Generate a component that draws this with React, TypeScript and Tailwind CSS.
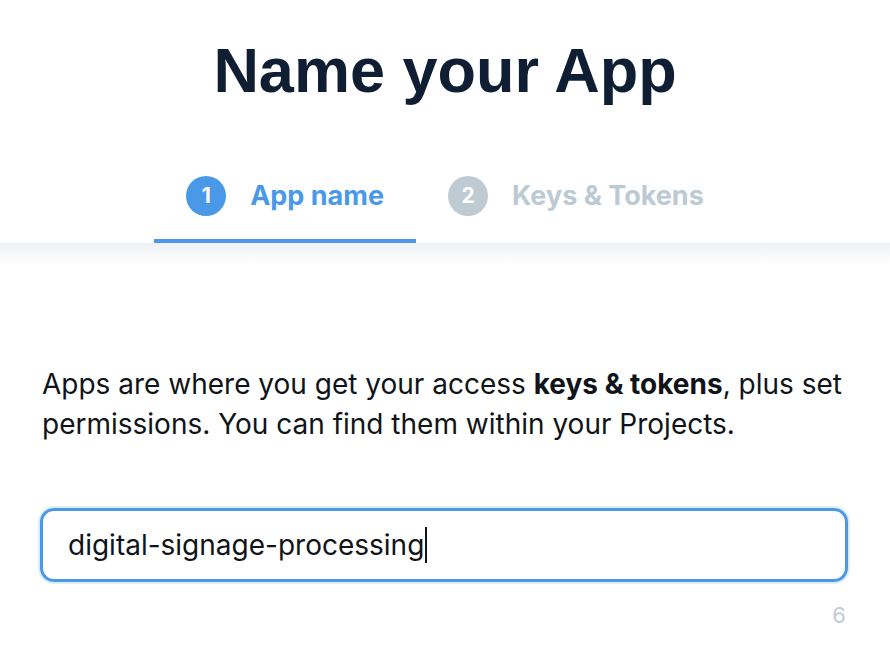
import React from 'react';

const tabs = [
  { n: 1, label: 'App name', active: true },
  { n: 2, label: 'Keys & Tokens', active: false },
];

export default function App() {
  return (
    <div className="w-[890px] h-[662px] bg-white overflow-hidden font-['Inter',sans-serif]">
      {/* Header */}
      <h1 className="pt-[39px] text-center text-[63px] leading-none font-bold text-[#0f1e32] font-['Liberation_Sans',Arial,sans-serif]">
        Name your App
      </h1>

      {/* Steps */}
      <div className="mt-[51px] flex justify-center">
        {tabs.map((t) => (
          <div
            key={t.n}
            className={
              t.active
                ? 'flex h-[90px] items-center gap-6 border-b-4 border-[#4a99e9] px-8'
                : 'flex h-[90px] items-center gap-6 border-b-4 border-transparent px-8'
            }
          >
            <span
              className={
                t.active
                  ? 'flex h-10 w-10 items-center justify-center rounded-full bg-[#4a99e9] text-[21px] font-bold text-white'
                  : 'flex h-10 w-10 items-center justify-center rounded-full bg-[#bfcbd3] text-[21px] font-bold text-white'
              }
            >
              {t.n}
            </span>
            <span
              className={
                t.active
                  ? 'text-[27px] font-bold text-[#4a99e9]'
                  : 'text-[27px] font-bold text-[#bccad3]'
              }
            >
              {t.label}
            </span>
          </div>
        ))}
      </div>
      <div className="h-[22px] bg-gradient-to-b from-[#eef1f4] to-white" />

      {/* Body */}
      <div className="px-10 pt-[99px]">
        <p className="pl-[2px] text-[28px] leading-[40px] text-[#0f1419]">
          Apps are where you get your access <b className="font-bold">keys &amp; tokens</b>, plus set permissions. You
          can find them within your Projects.
        </p>

        <div className="mt-[64px] flex h-[74px] w-[808px] items-center rounded-[14px] border-[3px] border-[#4a99e9] pl-[25px] shadow-[0_0_0_2px_rgba(74,153,233,0.18)]">
          <span className="text-[28px] text-[#0f1419]">digital-signage-processing</span>
          <span className="ml-[1px] h-[36px] w-[2px] bg-[#0f1419]" />
        </div>

        <div className="mt-[22px] w-[806px] text-right text-[22px] leading-none text-[#bfcbd3]">6</div>
      </div>
    </div>
  );
}
